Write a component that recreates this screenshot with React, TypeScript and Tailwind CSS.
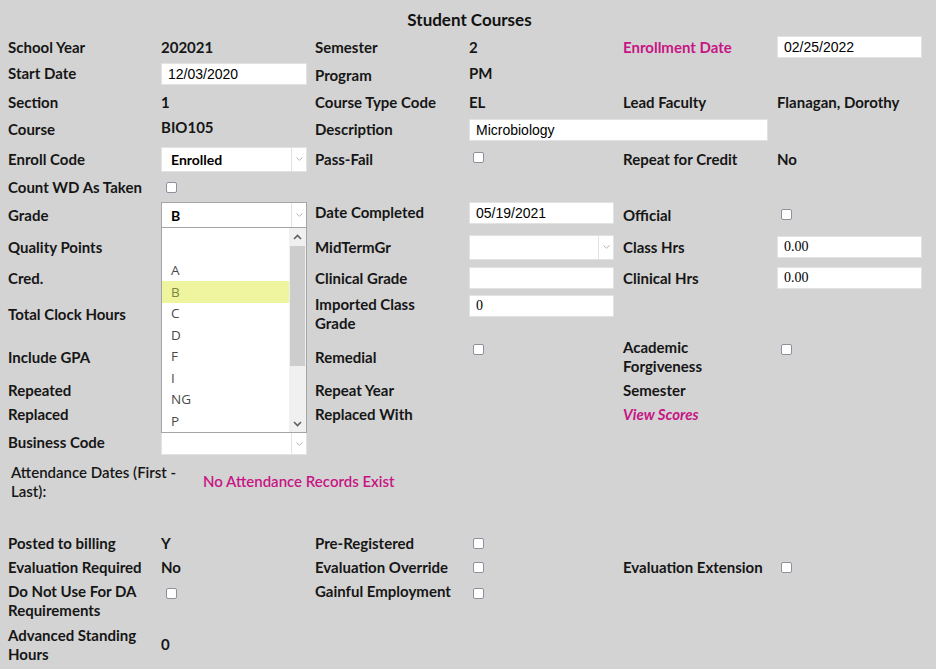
import React from 'react';

const COLS = 'grid grid-cols-[153px_154px_154px_154px_154px_154px] items-center';
const MAGENTA = 'text-[#c71585]';

function Label({ children, className = '' }: { children?: React.ReactNode; className?: string }) {
  return <div className={`text-[15px] leading-[19px] font-bold text-[#161616] ${className}`}>{children}</div>;
}

function TextBox({ value, w = 'w-[146px]', serif = false, className = '' }: { value: string; w?: string; serif?: boolean; className?: string }) {
  return (
    <input
      readOnly
      value={value}
      className={`${w} h-[22px] bg-white border border-[#e2e2e2] pl-[6px] text-[14px] text-black outline-none ${
        serif ? "font-['Liberation_Serif',serif]" : "font-['Liberation_Sans',sans-serif]"
      } ${className}`}
    />
  );
}

function Select({ value = '', h = 'h-[25px]', w = 'w-[146px]', border = 'border-[#e2e2e2]', className = '' }: { value?: string; h?: string; w?: string; border?: string; className?: string }) {
  return (
    <div className={`${w} ${h} bg-white border ${border} flex items-stretch ${className}`}>
      <div className="flex-1 flex items-center pl-[9px] text-[14px] font-bold text-black">{value}</div>
      <div className="w-[15px] border-l border-[#e2e2e2] flex items-center justify-center">
        <svg width="7" height="4" viewBox="0 0 7 4">
          <path d="M0.5 0.5 L3.5 3.2 L6.5 0.5" fill="none" stroke="#b5b5b5" strokeWidth="1" />
        </svg>
      </div>
    </div>
  );
}

function Check({ className = '' }: { className?: string }) {
  return <span className={`block w-[11px] h-[11px] bg-white border border-[#8f8f9d] rounded-[2px] ${className}`} />;
}

function GradeList() {
  const options = ['', 'A', 'B', 'C', 'D', 'F', 'I', 'NG', 'P'];
  return (
    <div className="absolute left-0 top-[26px] w-[146px] h-[205px] bg-white border border-[#a5a5a5] border-t-0 flex z-10">
      <div className="flex-1 pt-[10px] font-['Open_Sans',sans-serif] text-[13.5px]">
        {options.map((o, i) => (
          <div
            key={i}
            className={`h-[21.5px] flex items-center pl-[9px] ${o === 'B' ? 'bg-[#eff59f] text-[#7b8740]' : 'text-[#4a4a4a]'}`}
          >
            {o}
          </div>
        ))}
      </div>
      <div className="w-[17px] bg-[#f0f0f0] flex flex-col">
        <div className="h-[18px] flex items-center justify-center">
          <svg width="9" height="6" viewBox="0 0 9 6">
            <path d="M1 5 L4.5 1.5 L8 5" fill="none" stroke="#606060" strokeWidth="1.6" />
          </svg>
        </div>
        <div className="h-[120px] mx-[1px] bg-[#cdcdcd]" />
        <div className="flex-1" />
        <div className="h-[17px] flex items-center justify-center">
          <svg width="9" height="6" viewBox="0 0 9 6">
            <path d="M1 1 L4.5 4.5 L8 1" fill="none" stroke="#606060" strokeWidth="1.6" />
          </svg>
        </div>
      </div>
    </div>
  );
}

export default function App() {
  return (
    <div className="min-h-screen w-full bg-[#d3d3d3] font-['Lato',sans-serif]">
      <div className="pl-2 w-[931px]">
        {/* Title */}
        <div className="h-[35px] pt-[8px] text-center text-[17px] leading-[24px] font-bold text-[#111]">
          Student Courses
        </div>

        <div className={`${COLS} h-[25px]`}>
          <Label>School Year</Label>
          <Label>202021</Label>
          <Label>Semester</Label>
          <Label>2</Label>
          <Label className={`font-black ${MAGENTA}`}>Enrollment Date</Label>
          <TextBox value="02/25/2022" w="w-[145px]" className="-mt-[2px]" />
        </div>

        <div className={`${COLS} h-[28px]`}>
          <Label className="-mt-[2px]">Start Date</Label>
          <TextBox value="12/03/2020" />
          <Label className="mt-[2px]">Program</Label>
          <Label className="-mt-[2px]">PM</Label>
          <div />
          <div />
        </div>

        <div className={`${COLS} h-[28px]`}>
          <Label>Section</Label>
          <Label>1</Label>
          <Label>Course Type Code</Label>
          <Label>EL</Label>
          <Label>Lead Faculty</Label>
          <Label>Flanagan, Dorothy</Label>
        </div>

        <div className={`${COLS} h-[26px]`}>
          <Label>Course</Label>
          <Label className="-mt-[4px]">BIO105</Label>
          <Label>Description</Label>
          <div className="col-span-2">
            <TextBox value="Microbiology" w="w-[299px]" />
          </div>
          <div />
        </div>

        <div className={`${COLS} h-[34px]`}>
          <Label>Enroll Code</Label>
          <Select value="Enrolled" />
          <Label>Pass-Fail</Label>
          <Check className="ml-[4px] -mt-[4px]" />
          <Label>Repeat for Credit</Label>
          <Label>No</Label>
        </div>

        <div className={`${COLS} h-[23px]`}>
          <Label>Count WD As Taken</Label>
          <Check className="ml-[5px]" />
          <div />
          <div />
          <div />
          <div />
        </div>

        <div className={`${COLS} h-[32px]`}>
          <Label className="mt-[1px]">Grade</Label>
          <div className="relative">
            <Select value="B" h="h-[26px]" border="border-[#a5a5a5]" />
            <GradeList />
          </div>
          <Label className="-mt-[6px]">Date Completed</Label>
          <TextBox value="05/19/2021" w="w-[145px]" className="-mt-[4px]" />
          <Label className="mt-[1px]">Official</Label>
          <Check className="ml-[4px] -mt-[2px]" />
        </div>

        <div className={`${COLS} h-[32px]`}>
          <Label>Quality Points</Label>
          <div />
          <Label>MidTermGr</Label>
          <Select w="w-[145px]" />
          <Label>Class Hrs</Label>
          <TextBox value="0.00" w="w-[145px]" serif className="-mt-[1px]" />
        </div>

        <div className={`${COLS} h-[30px]`}>
          <Label>Cred.</Label>
          <div />
          <Label>Clinical Grade</Label>
          <TextBox value="" w="w-[145px]" />
          <Label>Clinical Hrs</Label>
          <TextBox value="0.00" w="w-[145px]" serif className="-mt-[1px]" />
        </div>

        <div className={`${COLS} h-[42px]`}>
          <Label>Total Clock Hours</Label>
          <div />
          <Label>
            Imported Class
            <br />
            Grade
          </Label>
          <TextBox value="0" w="w-[145px]" serif className="self-start mt-[2px]" />
          <div />
          <div />
        </div>

        <div className={`${COLS} h-[44px]`}>
          <Label>Include GPA</Label>
          <div />
          <Label>Remedial</Label>
          <Check className="self-start mt-[9px] ml-[4px]" />
          <Label>
            Academic
            <br />
            Forgiveness
          </Label>
          <Check className="self-start mt-[9px] ml-[4px]" />
        </div>

        <div className={`${COLS} h-[23px]`}>
          <Label>Repeated</Label>
          <div />
          <Label>Repeat Year</Label>
          <div />
          <Label>Semester</Label>
          <div />
        </div>

        <div className={`${COLS} h-[25px]`}>
          <Label>Replaced</Label>
          <div />
          <Label>Replaced With</Label>
          <div />
          <Label className={`italic ${MAGENTA}`}>View Scores</Label>
          <div />
        </div>

        <div className={`${COLS} h-[30px]`}>
          <Label>Business Code</Label>
          <Select h="h-[23px]" className="mt-[3px]" />
          <div />
          <div />
          <div />
          <div />
        </div>

        {/* Attendance */}
        <div className="h-[49px] flex items-center">
          <Label className="w-[195px] pl-[3px] pr-[12px] font-semibold">Attendance Dates (First - Last):</Label>
          <Label className={`font-semibold ${MAGENTA}`}>No Attendance Records Exist</Label>
        </div>

        <div className="h-[25px]" />

        <div className={`${COLS} h-[24px]`}>
          <Label>Posted to billing</Label>
          <Label>Y</Label>
          <Label>Pre-Registered</Label>
          <Check className="ml-[4px]" />
          <div />
          <div />
        </div>

        <div className={`${COLS} h-[24px]`}>
          <Label>Evaluation Required</Label>
          <Label>No</Label>
          <Label>Evaluation Override</Label>
          <Check className="ml-[4px]" />
          <Label>Evaluation Extension</Label>
          <Check className="ml-[4px]" />
        </div>

        <div className={`${COLS} h-[45px] !items-start`}>
          <Label className="mt-[3px]">
            Do Not Use For DA
            <br />
            Requirements
          </Label>
          <Check className="mt-[9px] ml-[5px]" />
          <Label className="mt-[3px]">Gainful Employment</Label>
          <Check className="mt-[9px] ml-[4px]" />
          <div />
          <div />
        </div>

        <div className={`${COLS} h-[41px]`}>
          <Label>
            Advanced Standing
            <br />
            Hours
          </Label>
          <Label>0</Label>
          <div />
          <div />
          <div />
          <div />
        </div>
      </div>
    </div>
  );
}
